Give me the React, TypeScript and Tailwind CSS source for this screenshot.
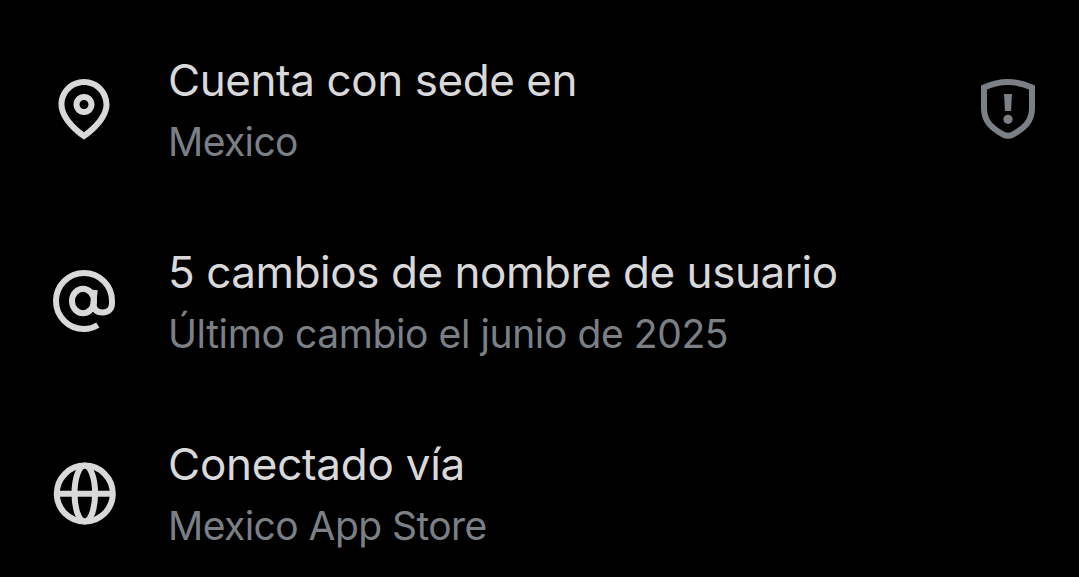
import React from "react";

const pin = (
  <svg viewBox="0 0 24 24" className="size-[72px]" fill="currentColor">
    <path d="M12 7c-1.93 0-3.5 1.57-3.5 3.5S10.07 14 12 14s3.5-1.57 3.5-3.5S13.93 7 12 7zm0 5c-.827 0-1.5-.673-1.5-1.5S11.173 9 12 9s1.5.673 1.5 1.5S12.827 12 12 12zm0-10c-4.687 0-8.5 3.813-8.5 8.5 0 5.967 7.621 11.116 7.945 11.332l.555.37.555-.37c.324-.216 7.945-5.365 7.945-11.332C20.5 5.813 16.687 2 12 2zm0 17.77c-1.665-1.241-6.5-5.196-6.5-9.27C5.5 6.916 8.416 4 12 4s6.5 2.916 6.5 6.5c0 4.073-4.835 8.028-6.5 9.27z" />
  </svg>
);

const at = (
  <svg viewBox="0 0 72 72" className="size-[72px]" fill="none" stroke="currentColor" strokeWidth="6">
    <path d="M49.800 60Q43.500 64 36 64A28 28 0 1 1 64 36v2c0 6-3.500 9.500-9.300 9.500-6.700 0-9.900-4-9.200-10.500l1.200-12" />
    <ellipse cx="35" cy="36" rx="11" ry="12.200" />
  </svg>
);

const globe = (
  <svg viewBox="0 0 72 72" className="size-[72px]" fill="none" stroke="currentColor" strokeWidth="6">
    <circle cx="36.800" cy="36.600" r="28" />
    <ellipse cx="36.800" cy="36.600" rx="10.300" ry="28" />
    <path d="M8.800 36.700h56" />
  </svg>
);

const shield = (
  <svg viewBox="0 0 72 72" className="size-[72px]" fill="none" stroke="currentColor" strokeWidth="6">
    <path d="M12 14.5Q24 9 36 9t24 5.500V35c0 14-8 20-19 26.500q-5 2.500-10 0C20 55 12 49 12 35z" />
    <path d="M32 21h8l-1 17h-6z" fill="currentColor" stroke="none" />
    <circle cx="36" cy="46.300" r="4.600" fill="currentColor" stroke="none" />
  </svg>
);

const rows = [
  { icon: pin, title: "Cuenta con sede en", detail: "Mexico", action: shield, titleSpacing: "tracking-[-0.43px]", detailSpacing: "tracking-[-0.6px]" },
  { icon: at, title: "5 cambios de nombre de usuario", detail: "Último cambio el junio de 2025", titleSpacing: "tracking-[-0.46px]", detailSpacing: "tracking-[-0.4px]" },
  { icon: globe, title: "Conectado vía", detail: "Mexico App Store", titleSpacing: "tracking-[-0.26px]", detailSpacing: "tracking-[-0.56px]" },
];

export default function App() {
  return (
    <main className="h-[577px] w-[1079px] overflow-hidden bg-black pt-[13px] font-['Inter',sans-serif]">
      {rows.map((row) => (
        <section key={row.title} className="flex h-48 items-center pl-12 pr-[35px] text-[#d9d9d9]">
          {row.icon}
          <div className="ml-12 flex-1 whitespace-nowrap pt-[3px]">
            <h2 className={`text-[44px] leading-[62px] ${row.titleSpacing}`}>{row.title}</h2>
            <p className={`text-[39px] leading-[62px] text-[#7b8087] ${row.detailSpacing}`}>{row.detail}</p>
          </div>
          {row.action && <div className="text-[#7b8087]">{row.action}</div>}
        </section>
      ))}
    </main>
  );
}
